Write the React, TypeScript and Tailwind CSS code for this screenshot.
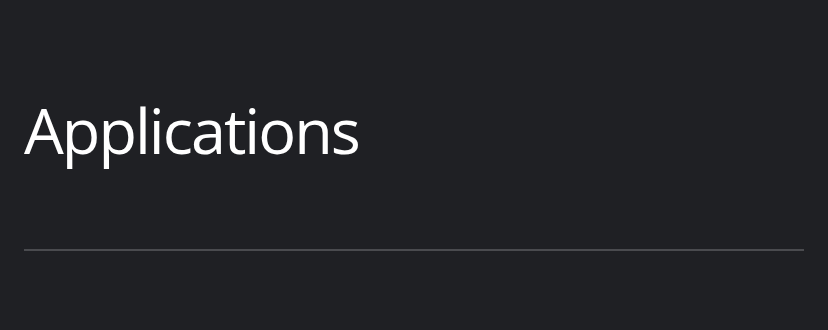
export default function App() {
  return (
    <div className="w-[828px] h-[330px] bg-[#1f2024] px-6 pt-[90px]" style={{ fontFamily: '"Open Sans", "Noto Sans", sans-serif' }}>
      <h1 className="text-[63px] leading-[80px] font-normal text-white tracking-[-2px]">Applications</h1>
      <div className="mt-[79px] h-[2px] bg-[#4a4b4f]" />
    </div>
  );
}
